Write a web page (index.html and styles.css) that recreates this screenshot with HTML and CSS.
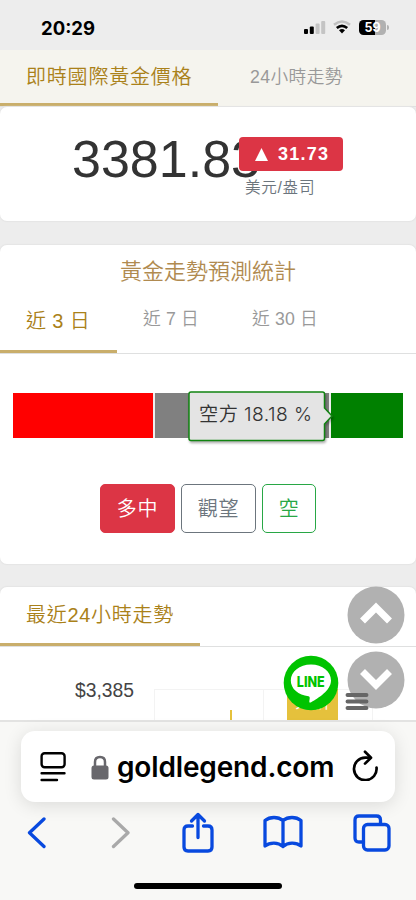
FILE: index.html
```html
<!DOCTYPE html>
<html lang="zh-Hant">
<head>
<meta charset="utf-8">
<title>即時國際黃金價格</title>
<link rel="stylesheet" href="styles.css">
</head>
<body>
<div class="phone">
  <header class="status">
    <span class="clock">20:29</span>
    <svg class="signal" width="22" height="14" viewBox="0 0 22 14"><rect x="0" y="9" width="4" height="5" rx="1"/><rect x="5.8" y="6.6" width="4" height="7.4" rx="1"/><g fill="#c4c4c4"><rect x="11.6" y="3.6" width="4" height="10.4" rx="1"/><rect x="17.2" y="1" width="4" height="13" rx="1"/></g></svg>
    <svg class="wifi" width="18" height="14" viewBox="0 0 18 14"><g fill="none" stroke-width="2.6"><path d="M1 4.8Q9-1.8 17 4.8" stroke="#c0c0c0"/><path d="M3.8 8Q9 3.6 14.2 8" stroke="#000"/></g><path d="M6 10.2Q9 7.9 12 10.2L9 13.4Z"/></svg>
    <span class="battery">59</span><i class="battery-tip"></i>
  </header>
  <nav class="tabs top-tabs">
    <a class="tab active">即時國際黃金價格</a>
    <a class="tab">24小時走勢</a>
  </nav>
  <section class="card price-card">
    <div class="price">3381.83</div>
    <div class="change"><svg width="13" height="13" viewBox="0 0 13 13"><path d="M6.5 0L13 13H0Z" fill="#fff"/></svg><span>31.73</span></div>
    <div class="unit">美元/盎司</div>
  </section>
  <section class="card forecast">
    <h2>黃金走勢預測統計</h2>
    <nav class="tabs range-tabs">
      <a class="tab active">近 3 日</a>
      <a class="tab">近 7 日</a>
      <a class="tab">近 30 日</a>
    </nav>
    <div class="bar">
      <i class="long"></i><i class="neutral"></i><i class="short"></i>
      <div class="tooltip">
        <svg width="150" height="56" viewBox="0 0 150 56"><path d="M3 2H134.500Q136.500 2 136.500 4V18L144 26L136.500 34V48.500Q136.500 50.500 134.500 50.500H3Q1 50.500 1 48.500V4Q1 2 3 2Z" fill="#e4e4e4" stroke="#118411" stroke-width="1.500"/></svg>
        <span>空方 18.18 %</span>
      </div>
    </div>
    <div class="votes">
      <button class="vote red">多中</button><button class="vote gray">觀望</button><button class="vote green">空</button>
    </div>
  </section>
  <section class="card trend">
    <nav class="tabs trend-tabs"><a class="tab active">最近24小時走勢</a></nav>
    <div class="chart">
      <span class="axis">$3,385</span>
      <div class="grid"><i></i><i></i></div>
      <b class="spark"></b>
      <span class="analysis">分析</span>
    </div>
  </section>
  <footer class="browser">
    <div class="address">
      <svg class="reader" width="26" height="32" viewBox="0 0 26 32"><g fill="none" stroke="#000" stroke-width="2.400" stroke-linecap="round"><rect x="1.600" y="2.200" width="23" height="14" rx="3"/><path d="M1.600 22.300H24.500M1.600 29H17"/></g></svg>
      <svg class="lock" width="18" height="25" viewBox="0 0 18 25"><rect x=".5" y="10.500" width="17" height="14" rx="2.500" fill="#68676c"/><path d="M4 12V7Q4 2 9 2T14 7V12" fill="none" stroke="#68676c" stroke-width="2.500"/></svg>
      <span class="host">goldlegend.com</span>
      <svg class="reload" width="26" height="31" viewBox="0 0 26 31"><g fill="none" stroke="#000" stroke-width="2.700" stroke-linecap="round" stroke-linejoin="round"><path d="M24.500 17.500A11.300 11.300 0 1 1 13.200 7.600H18"/><path d="M13 1.800L19 7.800L13 13.600"/></g></svg>
    </div>
    <div class="tools">
      <svg class="back" width="20" height="32" viewBox="0 0 20 32"><path d="M17 2L2.500 15.800L17 29.500"/></svg>
      <svg class="forward" width="20" height="32" viewBox="0 0 20 32"><path d="M2.500 2L17 15.800L2.500 29.500"/></svg>
      <svg class="share" width="34" height="42" viewBox="0 0 34 42"><path d="M10.500 14H6Q2 14 2 18V35Q2 39 6 39H26Q30 39 30 35V18Q30 14 26 14H21.500M16 25.500V3M9.500 9L16 2.500L22.500 9"/></svg>
      <svg class="book" width="40" height="34" viewBox="0 0 40 34"><path d="M20 5.500C15 1.500 7 1.500 2 5.500V31C7 27 15 27 20 31.500C25 27 33 27 38 31V5.500C33 1.500 25 1.500 20 5.500V31.500"/></svg>
      <svg class="pages" width="40" height="40" viewBox="0 0 40 40"><rect x="10.500" y="10.500" width="25.500" height="25.500" rx="4"/><path d="M10.500 28H6Q2 28 2 24V6Q2 2 6 2H23.500Q27.500 2 27.500 6V10"/></svg>
    </div>
    <i class="home"></i>
  </footer>
  <svg class="scroll up" width="58" height="58" viewBox="0 0 58 58"><circle cx="29" cy="29" r="28.500" fill="#b1b1b1"/><path d="M15.500 35L29 21.500L42.500 35" fill="none" stroke="#fff" stroke-width="7"/></svg>
  <svg class="scroll down" width="58" height="58" viewBox="0 0 58 58"><circle cx="29" cy="29" r="28.500" fill="#b1b1b1"/><path d="M15.500 20.500L29 34L42.500 20.500" fill="none" stroke="#fff" stroke-width="7"/></svg>
  <svg class="burger" width="24" height="20" viewBox="0 0 24 20"><path d="M2.500 3H21.500M2.500 9.500H21.500M2.500 16H21.500" stroke="#666" stroke-width="3.900" stroke-linecap="round"/></svg>
  <svg class="line" width="56" height="56" viewBox="0 0 56 56"><circle cx="28" cy="28" r="27.300" fill="#00c300"/><path d="M28 9.500C16.500 9.500 7.800 16.500 7.800 25.500C7.800 34 15.500 40 25.500 41.300C27.500 41.700 26.500 44.500 26.300 46.700C26.300 48 27.500 47.600 28.500 47C35 43.200 48 35.500 48 25.500C48 16.500 39.500 9.500 28 9.500Z" fill="#fff"/><text x="13.800" y="31.500" textLength="28" lengthAdjust="spacingAndGlyphs">LINE</text></svg>
</div>
</body>
</html>
```
FILE: styles.css
```css
* { box-sizing: border-box; }
body { margin: 0; font-family: "Liberation Sans", "Noto Sans CJK TC", sans-serif; font-weight: 350; }
svg { display: block; flex: none; }
.phone { position: relative; width: 416px; height: 900px; overflow: hidden; background: #ededed; }
.status { display: flex; height: 50px; padding-top: 18px; align-items: flex-start; }
.clock { width: 263px; padding-left: 41px; font: 700 18.5px/20px Inter, sans-serif; }
.signal { margin: 2px 0 0 41px; }
.wifi { margin: 2px 0 0 7px; }
.battery { width: 27px; height: 15px; margin: 2px 0 0 8px; border-radius: 4.5px; background: linear-gradient(90deg, #000 60%, #b1b1b1 60%); color: #fff; font: 700 12.5px/15px Inter, sans-serif; text-align: center; }
.battery-tip { width: 2px; height: 5px; margin: 7px 0 0 1px; background: #b1b1b1; border-radius: 0 2px 2px 0; }
.tabs { display: flex; border-bottom: 1px solid #dfe0e0; }
.tab { color: #999; font-size: 17.7px; white-space: nowrap; letter-spacing: .4px; }
.tab.active { color: #aa8119; font-size: 20px; letter-spacing: .8px; border-bottom: 3px solid #c9ae6b; padding-left: 26px; }
.top-tabs { height: 57px; background: #f5f4ee; line-height: 54px; }
.top-tabs .active { width: 218px; height: 56px; line-height: 54px; }
.top-tabs .tab:last-child { margin-left: 32px; }
.card { position: relative; background: #fff; border-radius: 7px; box-shadow: 0 0 1px 1px #e5e5e5; }
.price-card { height: 114px; margin-bottom: 24px; }
.price { padding: 22px 0 0 72px; color: #333; font: 400 52px/60px "Liberation Sans", sans-serif; }
.change { position: absolute; left: 239px; top: 30px; width: 104px; height: 34px; padding-left: 16px; display: flex; align-items: center; gap: 10px; border-radius: 4px; background: #dc3545; color: #fff; font: 700 18px/34px "Liberation Sans", sans-serif; letter-spacing: 1.25px; }
.unit { position: absolute; left: 245px; top: 69px; color: #6c757d; font-size: 15.6px; line-height: 24px; letter-spacing: .7px; }
.forecast { height: 319px; margin-bottom: 23px; }
.forecast h2 { height: 52px; margin: 0; text-align: center; color: #b08a50; font-size: 22px; line-height: 53px; font-weight: 350; }
.range-tabs { height: 57px; line-height: 45px; }
.range-tabs .active { width: 117px; height: 56px; line-height: 49px; letter-spacing: .4px; }
.range-tabs .tab:nth-child(2) { margin-left: 26px; width: 109px; }
.range-tabs .tab:not(.active) { letter-spacing: .15px; }
.bar { position: relative; display: flex; gap: 2px; width: 390px; height: 45px; margin: 39px 13px 0; background: #eee; }
.bar i { display: block; }
.long { width: 140px; background: red; }
.neutral { width: 174px; background: gray; }
.short { flex: 1; background: green; }
.tooltip { position: absolute; left: 175px; top: -3px; }
.tooltip svg { filter: drop-shadow(1px 2px 1px rgb(0 0 0 / .3)); }
.tooltip span { position: absolute; left: 11px; top: 10px; color: #333; font: 350 19.2px/28px Inter, "Noto Sans CJK TC", sans-serif; letter-spacing: .45px; white-space: nowrap; }
.votes { display: flex; gap: 6px; margin: 46px 0 0 100px; }
.vote { width: 75px; height: 49px; padding: 2px 0 0; border: 1px solid; border-radius: 5px; background: #fff; font: 350 20px/45px "Liberation Sans", "Noto Sans CJK TC", sans-serif; letter-spacing: .7px; }
.red { color: #fff; background: #dc3545; border-color: #dc3545; }
.gray { color: #6c757d; }
.green { width: 54px; color: #28a745; }
.trend { height: 140px; }
.trend-tabs { height: 60px; line-height: 56px; }
.trend-tabs .active { width: 200px; height: 59px; letter-spacing: .7px; }
.chart { position: relative; height: 80px; }
.axis { position: absolute; left: 75px; top: 31px; color: #444; font: 400 19.3px/26px "Liberation Sans", sans-serif; }
.grid { position: absolute; display: flex; left: 154px; top: 42px; width: 219px; height: 38px; border: solid #f3f3f3; border-width: 1px 0 0 1px; }
.grid i { flex: 1; border-right: 1px solid #f3f3f3; }
.spark { position: absolute; left: 230px; top: 63px; width: 2px; height: 17px; background: #e5c13c; }
.analysis { position: absolute; left: 287px; top: 42px; width: 51px; height: 40px; background: #e5c13c; color: #fff; font-size: 18px; line-height: 26px; text-align: center; }
.browser { position: absolute; left: 0; top: 720px; width: 416px; height: 180px; border-top: 2px solid #e3e3e2; background: #f8f8f6; }
.address { display: flex; align-items: flex-start; width: 374px; height: 71px; margin: 9px 21px 0; border-radius: 14px; background: #fff; box-shadow: 0 3px 18px rgb(0 0 0 / .12); }
.reader { margin: 20px 0 0 19px; }
.lock { margin: 24px 0 0 25px; }
.host { width: 218px; margin: 17px 0 0 8px; font: 600 28px/38px Inter, sans-serif; letter-spacing: -.15px; white-space: nowrap; }
.reload { margin: 19px 0 0 17px; }
.tools { display: flex; padding-left: 27px; margin-top: 9px; }
.tools svg { fill: none; stroke: #0849df; stroke-width: 3.3; stroke-linecap: round; stroke-linejoin: round; }
.back { margin-top: 6px; }
.tools .forward { margin: 6px 0 0 64px; stroke: #a9a9a9; }
.share { margin: 1px 0 0 51px; }
.book { margin: 4px 0 0 47px; }
.pages { margin: 3px 0 0 50px; }
.home { position: absolute; left: 134px; top: 161px; width: 148px; height: 6px; border-radius: 3px; background: #000; }
.scroll { position: absolute; left: 347px; }
.up { top: 586px; }
.down { top: 651px; }
.burger { position: absolute; left: 345px; top: 692px; }
.line { position: absolute; left: 283px; top: 655px; }
.line text { fill: #00c300; font: 800 15px Inter, sans-serif; }
```
